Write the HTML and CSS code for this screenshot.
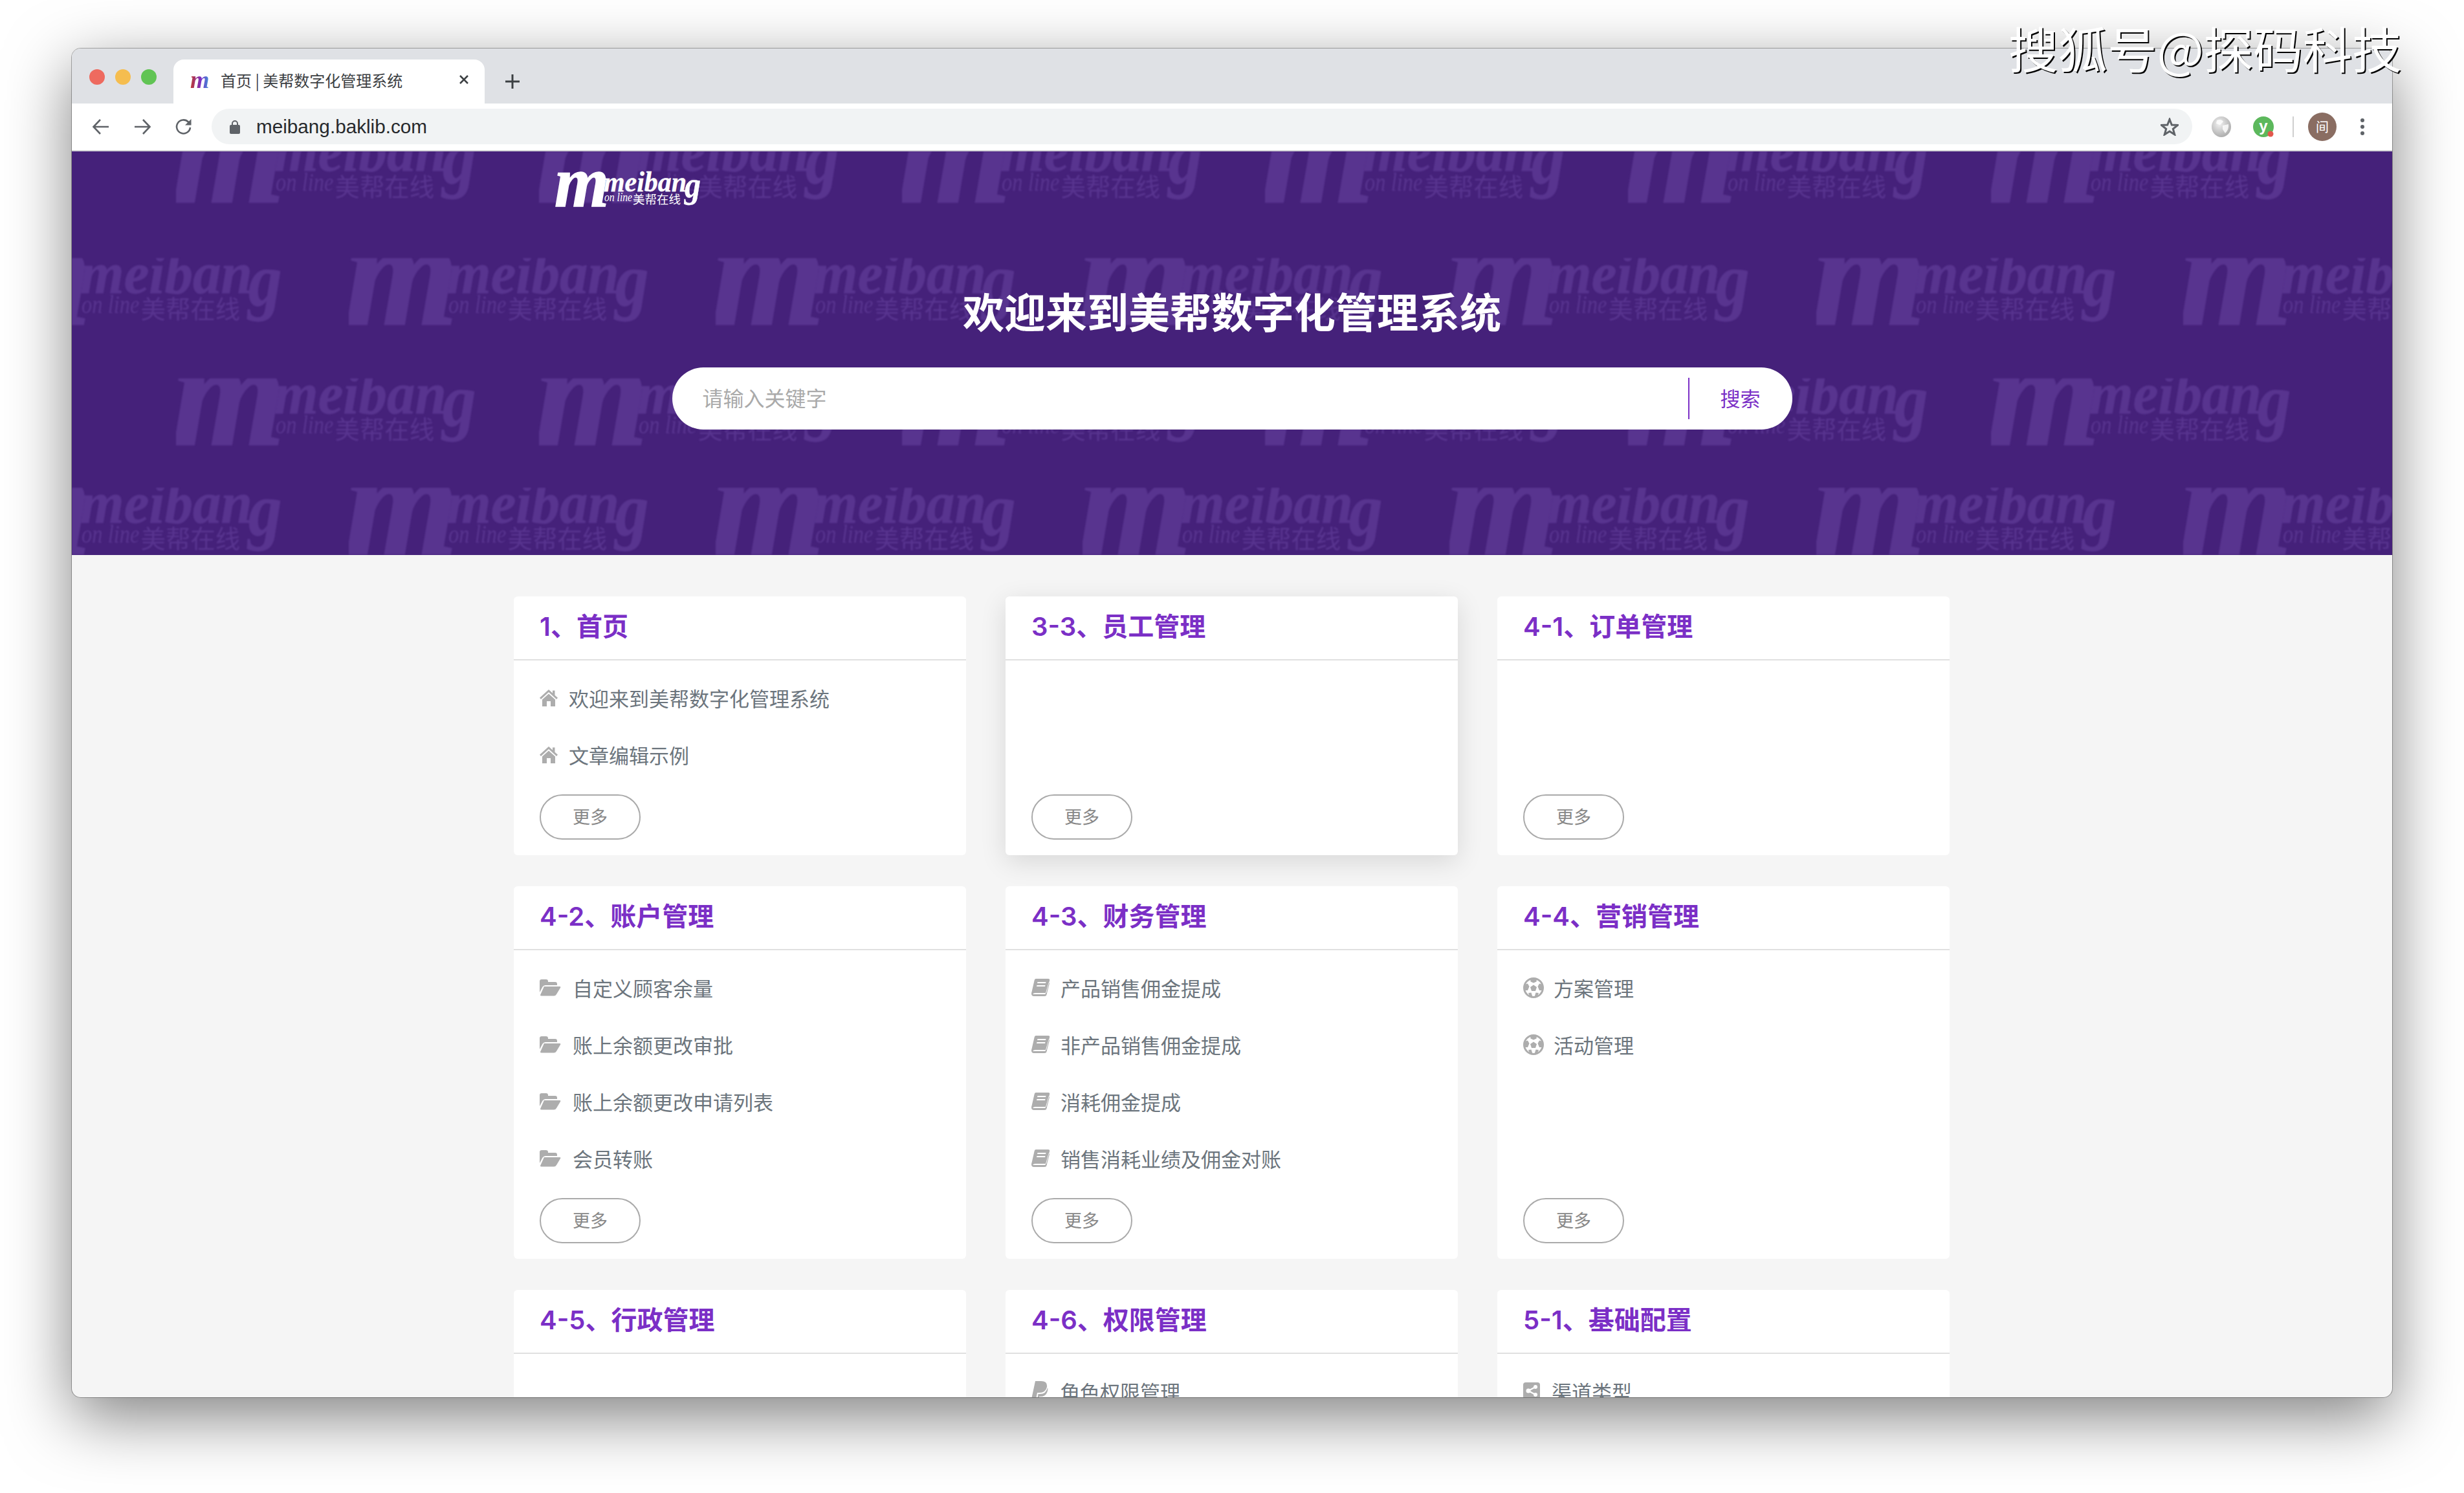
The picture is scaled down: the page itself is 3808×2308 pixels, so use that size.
FILE: index.html
```html
<!DOCTYPE html>
<html lang="zh-CN">
<head>
    <meta charset="UTF-8">
    <title>首页 | 美帮数字化管理系统</title>
    <link rel="stylesheet" href="styles.css">
</head>
<body>
    <svg class="defs" width="0" height="0">
        <defs>
            <symbol id="logo" viewBox="0 0 223 52" overflow="visible">
                <text class="logo-m" x="-3" y="49" textLength="84" lengthAdjust="spacingAndGlyphs">m</text>
                <text class="logo-name" x="73" y="26" textLength="128" lengthAdjust="spacingAndGlyphs">meiban</text>
                <text class="logo-g" x="198" y="35" textLength="25" lengthAdjust="spacingAndGlyphs">g</text>
                <text class="logo-sub" x="74" y="41" textLength="43" lengthAdjust="spacingAndGlyphs">on line</text>
                <text class="logo-cn" x="118" y="45">美帮在线</text>
            </symbol>
            <symbol id="i-home" viewBox="0 0 28 28">
                <path d="M14 1 L20 6.500 V2.500 H23.500 V9.700 L28 13.800 L26 16 L14 5 L2 16 L0 13.800 Z"/>
                <path d="M14 7.600 L24 16.600 V27 H17 V19 H11 V27 H4 V16.600 Z"/>
            </symbol>
            <symbol id="i-folder" viewBox="0 0 33 26">
                <path d="M0 20 V3 Q0 0 3 0 H10 Q13 0 13 3 V4 H24 Q27 4 27 7 V9 H9 Q6 9 4.500 11.500 Z"/>
                <path d="M7 11 H31 Q33 11 32 13 L26 23 Q24.500 25.500 22 25.500 H3 Q0 25.500 1.500 23 L6 13 Q6.500 11 7 11 Z"/>
            </symbol>
            <symbol id="i-book" viewBox="0 0 29 27">
                <path d="M7 0 H26 Q29 0 28 3 L23 22 H6 Q3 22 2 24 H21.500 L26.600 6 L28 7 L23.500 24.500 Q23 27 20 27 H4 Q0 27 0 23 Q0 21.500 .6 20 L4.500 3 Q5 0 7 0 Z M9.500 5 L9 7 H22 L22.500 5 Z M8.500 10 L8 12 H21 L21.500 10 Z" fill-rule="evenodd"/>
            </symbol>
            <symbol id="i-ball" viewBox="0 0 32 32">
                <circle class="i-ring" cx="16" cy="16" r="14.500"/>
                <path d="M16 11.500 L21 15 L19 21 H13 L11 15 Z"/>
                <path d="M11 2 H21 L20.500 6.500 L16 8.500 L11.500 6.500 Z"/>
                <path d="M2 11 L7 9.500 L9.500 14 L7 20 L2.500 20 Z"/>
                <path d="M30 11 L25 9.500 L22.500 14 L25 20 L29.500 20 Z"/>
                <path d="M8 24 L12.500 23.500 L14.500 30 L10 29.500 Z"/>
                <path d="M24 24 L19.500 23.500 L17.500 30 L22 29.500 Z"/>
            </symbol>
            <symbol id="i-paypal" viewBox="0 0 26 32">
                <path d="M6 0 H15 Q25 0 24 9 Q22 18 12 18 H9 L7 28 H0 Z"/>
                <path d="M25 10 Q26 14 24 18 Q21 24 14 24 H12 L10.500 32 H5 L5.500 29 H9 L10.500 20 H13 Q23 20 25 10 Z"/>
            </symbol>
            <symbol id="i-share" viewBox="0 0 26 28">
                <rect width="26" height="28" rx="4"/>
                <path class="i-cut" d="M8 13 L19 7 M8 13 L19 19"/>
                <circle class="i-dot" cx="8" cy="13" r="3.500"/>
                <circle class="i-dot" cx="19" cy="7" r="3"/>
                <circle class="i-dot" cx="19" cy="19" r="3"/>
            </symbol>
            <radialGradient id="globe-fill" cx="0.4" cy="0.35" r="0.7">
                <stop offset="0" stop-color="#f2f2f2"/>
                <stop offset="1" stop-color="#a9a9a9"/>
            </radialGradient>
            <pattern id="wm-a" patternUnits="userSpaceOnUse" x="161" y="-24" width="561" height="375">
                <use class="wm-logo" href="#logo" width="464" height="108"/>
            </pattern>
            <pattern id="wm-b" patternUnits="userSpaceOnUse" x="428" y="165" width="567" height="355">
                <use class="wm-logo" href="#logo" width="464" height="108"/>
            </pattern>
        </defs>
    </svg>

    <div class="watermark">搜狐号@探码科技</div>

    <div class="window">
        <div class="tabbar">
            <div class="lights">
                <span class="light light-red"></span>
                <span class="light light-yellow"></span>
                <span class="light light-green"></span>
            </div>
            <div class="tab">
                <span class="favicon">m</span>
                <span class="tab-title">首页 | 美帮数字化管理系统</span>
                <svg class="tab-close" viewBox="0 0 16 16"><path d="M2 2 L14 14 M14 2 L2 14"/></svg>
            </div>
            <svg class="new-tab" viewBox="0 0 24 24"><path d="M12 1 V23 M1 12 H23"/></svg>
        </div>

        <div class="toolbar">
            <svg class="nav-icon" viewBox="0 0 28 28"><path d="M26 14 H3 M13 3 L2.500 14 L13 25"/></svg>
            <svg class="nav-icon" viewBox="0 0 28 28"><path d="M2 14 H25 M15 3 L25.500 14 L15 25"/></svg>
            <svg class="nav-icon" viewBox="0 0 28 28"><path d="M24 15 A10.500 10.500 0 1 1 21 6.500 L24.500 10"/><path class="nav-fill" d="M25.500 2 V11.500 H16 Z"/></svg>
            <div class="omnibox">
                <svg class="lock" viewBox="0 0 16 22"><path d="M4 9 V6 A4 4 0 0 1 12 6 V9" fill="none" stroke="#5f6368" stroke-width="2"/><rect x="0" y="8" width="16" height="14" rx="2" fill="#5f6368"/></svg>
                <span class="url">meibang.baklib.com</span>
                <svg class="star" viewBox="0 0 28 28"><path d="M14 2.500 L17.300 11 L26.500 11.500 L19.300 17.200 L21.800 26 L14 21 L6.200 26 L8.700 17.200 L1.500 11.500 L10.700 11 Z"/></svg>
            </div>
            <div class="extensions">
                <svg class="ext" viewBox="0 0 30 32"><ellipse cx="15" cy="16" rx="15" ry="16" fill="url(#globe-fill)"/><path d="M8 6 Q15 3 18 8 L13 13 L7 11 Z M17 14 L26 12 Q27 20 21 26 L17 20 Z" fill="#fff" opacity="0.8"/></svg>
                <svg class="ext" viewBox="0 0 32 32"><ellipse cx="16" cy="16" rx="16" ry="16" fill="#5cb85c"/><text class="ext-y" x="16" y="23">y</text><circle cx="27" cy="27" r="4.500" fill="#e2574c"/></svg>
                <span class="ext-sep"></span>
                <span class="avatar">间</span>
                <span class="menu-dots"><i></i><i></i><i></i></span>
            </div>
        </div>

        <div class="page">
            <div class="hero">
                <svg class="hero-bg" width="3586" height="624">
                    <rect x="161" width="3366" height="624" fill="url(#wm-a)"/>
                    <rect width="3586" height="624" fill="url(#wm-b)"/>
                </svg>
                <div class="site-nav">
                    <svg class="site-logo" width="223" height="52"><use href="#logo"/></svg>
                </div>
                <div class="hero-body">
                    <h1>欢迎来到美帮数字化管理系统</h1>
                    <div class="search">
                        <span class="search-hint">请输入关键字</span>
                        <span class="search-btn">搜索</span>
                    </div>
                </div>
            </div>

            <div class="cards">
                <section class="card">
                    <h2>1、首页</h2>
                    <ul>
                        <li><svg class="ic ic-home"><use href="#i-home"/></svg>欢迎来到美帮数字化管理系统</li>
                        <li><svg class="ic ic-home"><use href="#i-home"/></svg>文章编辑示例</li>
                    </ul>
                    <a class="more">更多</a>
                </section>
                <section class="card card-hover">
                    <h2>3-3、员工管理</h2>
                    <ul></ul>
                    <a class="more">更多</a>
                </section>
                <section class="card">
                    <h2>4-1、订单管理</h2>
                    <ul></ul>
                    <a class="more">更多</a>
                </section>

                <section class="card">
                    <h2>4-2、账户管理</h2>
                    <ul>
                        <li><svg class="ic ic-folder"><use href="#i-folder"/></svg>自定义顾客余量</li>
                        <li><svg class="ic ic-folder"><use href="#i-folder"/></svg>账上余额更改审批</li>
                        <li><svg class="ic ic-folder"><use href="#i-folder"/></svg>账上余额更改申请列表</li>
                        <li><svg class="ic ic-folder"><use href="#i-folder"/></svg>会员转账</li>
                    </ul>
                    <a class="more">更多</a>
                </section>
                <section class="card">
                    <h2>4-3、财务管理</h2>
                    <ul>
                        <li><svg class="ic ic-book"><use href="#i-book"/></svg>产品销售佣金提成</li>
                        <li><svg class="ic ic-book"><use href="#i-book"/></svg>非产品销售佣金提成</li>
                        <li><svg class="ic ic-book"><use href="#i-book"/></svg>消耗佣金提成</li>
                        <li><svg class="ic ic-book"><use href="#i-book"/></svg>销售消耗业绩及佣金对账</li>
                    </ul>
                    <a class="more">更多</a>
                </section>
                <section class="card">
                    <h2>4-4、营销管理</h2>
                    <ul>
                        <li><svg class="ic ic-ball"><use href="#i-ball"/></svg>方案管理</li>
                        <li><svg class="ic ic-ball"><use href="#i-ball"/></svg>活动管理</li>
                    </ul>
                    <a class="more">更多</a>
                </section>

                <section class="card">
                    <h2>4-5、行政管理</h2>
                    <ul></ul>
                </section>
                <section class="card">
                    <h2>4-6、权限管理</h2>
                    <ul>
                        <li><svg class="ic ic-paypal"><use href="#i-paypal"/></svg>角色权限管理</li>
                    </ul>
                </section>
                <section class="card">
                    <h2>5-1、基础配置</h2>
                    <ul>
                        <li><svg class="ic ic-share"><use href="#i-share"/></svg>渠道类型</li>
                    </ul>
                </section>
            </div>
        </div>
    </div>
</body>
</html>
```

FILE: styles.css
```css
* {
    box-sizing: border-box;
}
html, body {
    margin: 0;
    height: 2308px;
    overflow: hidden;
}
body {
    padding: 75px 111px 148px;
    background-color: #fff;
    font-family: "Noto Sans CJK SC", "Liberation Sans", sans-serif;
}
.defs {
    position: absolute;
}

/* logo text */
.logo-m {
    font: italic bold 112px "Liberation Serif", serif;
    stroke-width: 1.500;
}
.logo-name {
    font: italic bold 44px "Liberation Serif", serif;
    stroke-width: 0.400;
}
.logo-g {
    font: italic bold 56px "Liberation Serif", serif;
    stroke-width: 0.400;
}
.logo-sub {
    font: italic 19px "Liberation Serif", serif;
    stroke-width: 0;
}
.logo-cn {
    font: 18.500px "Noto Sans CJK SC", sans-serif;
    stroke-width: 0;
}
.wm-logo {
    fill: #58348f;
    stroke: #58348f;
}

/* repost stamp over the screenshot */
.watermark {
    position: absolute;
    left: 3104px;
    top: 21px;
    z-index: 5;
    font-size: 76.500px;
    line-height: 104px;
    white-space: nowrap;
    color: #fff;
    text-shadow: 2px 2px 0 #000;
}

.window {
    height: 2085px;
    overflow: hidden;
    display: flex;
    flex-direction: column;
    border-radius: 14px;
    background-color: #f5f5f5;
    box-shadow: 0 0 0 1px rgba(0,0,0,0.3), 0 30px 100px rgba(0,0,0,0.5);
}

/* browser chrome */
.tabbar {
    height: 85px;
    flex: none;
    display: flex;
    align-items: flex-end;
    background-color: #dfe1e5;
}
.lights {
    width: 157px;
    height: 68px;
    padding: 15px 0 0 27px;
    display: flex;
    gap: 16px;
    align-self: flex-end;
    flex: none;
}
.light {
    width: 24px;
    height: 24px;
    border-radius: 50%;
}
.light-red {
    background-color: #ee6a5f;
}
.light-yellow {
    background-color: #f5bd4f;
}
.light-green {
    background-color: #61c454;
}
.tab {
    width: 481px;
    height: 68px;
    flex: none;
    padding: 0 24px 6px 26px;
    display: flex;
    align-items: center;
    background-color: #fff;
    border-radius: 16px 16px 0 0;
}
.favicon {
    width: 30px;
    height: 30px;
    flex: none;
    font: italic bold 38px/30px "Liberation Serif", serif;
    background: linear-gradient(90deg, #c0392b, #7b2fc6 55%, #3a9ad9);
    -webkit-background-clip: text;
    background-clip: text;
    color: transparent;
}
.tab-title {
    margin-left: 17px;
    flex: 1;
    font-size: 24px;
    color: #3c4043;
    white-space: nowrap;
}
.tab-close {
    width: 16px;
    height: 16px;
    flex: none;
    fill: none;
    stroke: #3c4043;
    stroke-width: 2.500;
}
.new-tab {
    width: 24px;
    height: 24px;
    margin: 0 0 22px 31px;
    fill: none;
    stroke: #3c4043;
    stroke-width: 3;
}
.toolbar {
    height: 74px;
    flex: none;
    padding: 8px 0 9px 31px;
    display: flex;
    align-items: center;
    gap: 36px;
    background-color: #fff;
    border-bottom: 2px solid #d4d5d8;
}
.nav-icon {
    width: 28px;
    height: 28px;
    flex: none;
    fill: none;
    stroke: #5f6368;
    stroke-width: 2.600;
}
.nav-fill {
    fill: #5f6368;
    stroke: none;
}
.omnibox {
    width: 3061px;
    height: 55px;
    flex: none;
    margin-left: -7px;
    padding: 0 21px 0 28px;
    display: flex;
    align-items: center;
    background-color: #f1f3f4;
    border-radius: 28px;
}
.lock {
    width: 16px;
    height: 22px;
    flex: none;
}
.url {
    margin-left: 25px;
    flex: 1;
    font-family: "Liberation Sans", sans-serif;
    font-size: 29.700px;
    color: #27292c;
}
.star {
    width: 28px;
    height: 28px;
    fill: none;
    stroke: #5f6368;
    stroke-width: 3;
}
.extensions {
    margin-left: -7px;
    display: flex;
    align-items: center;
}
.ext {
    width: 32px;
    height: 32px;
    margin-right: 33px;
    flex: none;
}
.ext-y {
    font: bold 24px "Liberation Sans", sans-serif;
    fill: #fff;
    text-anchor: middle;
}
.ext-sep {
    width: 2px;
    height: 32px;
    margin-left: -4px;
    background-color: #cfcfcf;
}
.avatar {
    width: 44px;
    height: 44px;
    margin-left: 22px;
    border-radius: 50%;
    background-color: #8a6d62;
    color: #fff;
    font-size: 20px;
    line-height: 44px;
    text-align: center;
}
.menu-dots {
    margin-left: 37px;
    display: flex;
    flex-direction: column;
    gap: 4px;
}
.menu-dots i {
    width: 6px;
    height: 6px;
    border-radius: 50%;
    background-color: #5f6368;
}

/* hero */
.page {
    flex: 1;
    min-height: 0;
}
.hero {
    position: relative;
    height: 624px;
    overflow: hidden;
    background-color: #45217a;
}
.hero-bg {
    position: absolute;
    left: 0;
    top: 0;
    filter: blur(1px);
}
.site-nav {
    position: relative;
    height: 124px;
    padding: 36px 0 0 749px;
}
.site-logo {
    display: block;
    fill: #fff;
    stroke: #fff;
    overflow: visible;
}
.hero-body {
    position: relative;
    display: flex;
    flex-direction: column;
    align-items: center;
}
.hero-body h1 {
    margin: 81px 0 0;
    font-size: 64px;
    line-height: 80px;
    font-weight: 700;
    color: #fff;
}
.search {
    width: 1731px;
    height: 96px;
    margin-top: 49px;
    padding: 0 0 0 47px;
    display: flex;
    align-items: center;
    justify-content: space-between;
    background-color: #fff;
    border-radius: 48px;
}
.search-hint {
    padding-bottom: 4px;
    font-size: 32px;
    color: #aaa;
}
.search-btn {
    width: 161px;
    height: 64px;
    padding-left: 48px;
    border-left: 2px solid #7b2fc6;
    font-size: 31px;
    line-height: 62px;
    color: #7b2fc6;
}

/* card grid */
.cards {
    width: 2219px;
    margin: 64px 0 0 683px;
    display: grid;
    grid-template-columns: repeat(3, 699px);
    column-gap: 61px;
    row-gap: 48px;
}
.card {
    padding-bottom: 24px;
    display: flex;
    flex-direction: column;
    background-color: #fff;
    border-radius: 6px;
}
.card-hover {
    box-shadow: 0 10px 40px rgba(0,0,0,0.12);
}
.card h2 {
    margin: 0;
    height: 99px;
    padding: 0 40px;
    border-bottom: 2px solid #e0e0e0;
    font-family: Inter, "Noto Sans CJK SC", sans-serif;
    font-size: 40px;
    line-height: 93px;
    font-weight: 600;
    color: #7b2fc6;
}
.card ul {
    margin: 0 0 15px;
    padding: 16px 40px 0;
    list-style: none;
}
.card li {
    height: 88px;
    padding-bottom: 5px;
    display: flex;
    align-items: center;
    font-size: 31px;
    color: #6c757d;
}
.ic {
    flex: none;
    fill: #adadad;
}
.i-ring {
    fill: #fff;
    stroke: #adadad;
    stroke-width: 3;
}
.i-cut {
    fill: none;
    stroke: #fff;
    stroke-width: 2;
}
.i-dot {
    fill: #fff;
}
.ic-home {
    width: 28px;
    height: 28px;
    margin-right: 17px;
}
.ic-folder {
    width: 33px;
    height: 26px;
    margin-right: 18px;
}
.ic-book {
    width: 29px;
    height: 27px;
    margin-right: 16px;
}
.ic-ball {
    width: 32px;
    height: 32px;
    margin-right: 15px;
}
.ic-paypal {
    width: 26px;
    height: 32px;
    margin-right: 18px;
}
.ic-share {
    width: 26px;
    height: 28px;
    margin-right: 18px;
}
.more {
    width: 156px;
    height: 70px;
    margin: auto 0 0 40px;
    border: 2px solid #aaa;
    border-radius: 35px;
    font-size: 27px;
    line-height: 64px;
    text-align: center;
    color: #888;
}
```
